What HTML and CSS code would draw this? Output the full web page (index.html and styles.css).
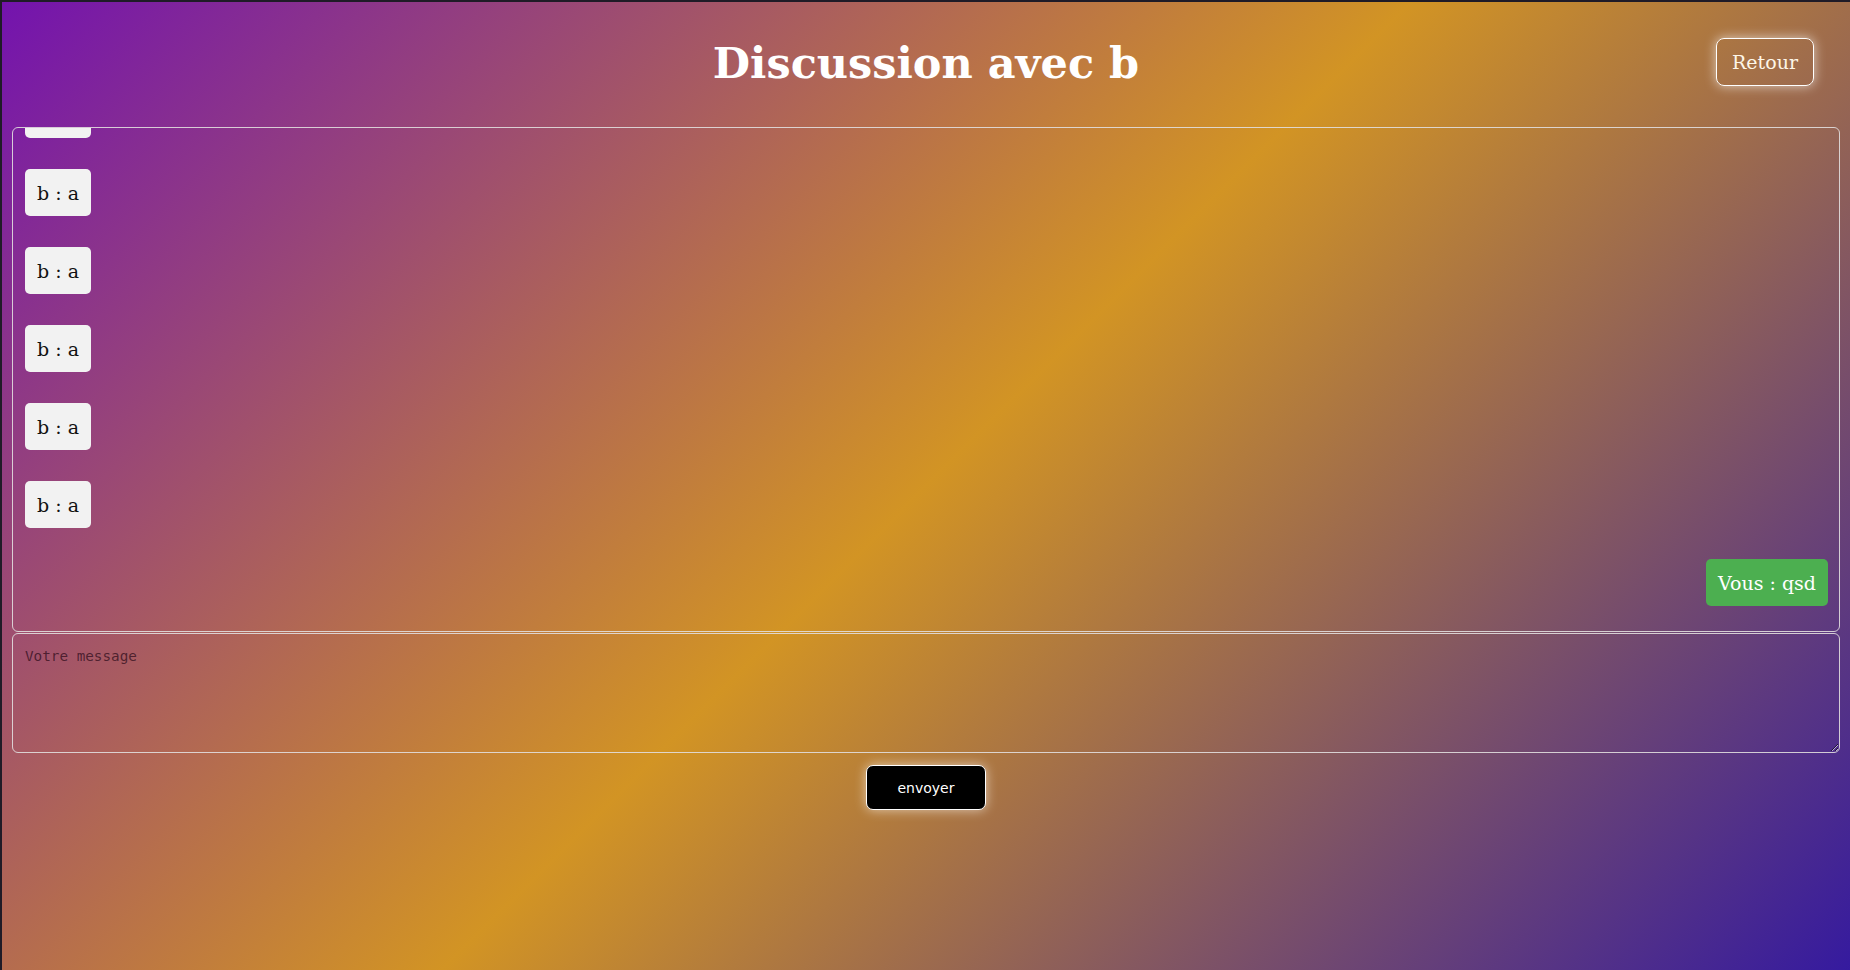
FILE: index.html
```html
<!DOCTYPE html>
<html lang="fr">
<head>
<meta charset="utf-8">
<title>Discussion avec b</title>
<link rel="stylesheet" href="styles.css">
</head>
<body>
<div class="page">
  <header class="header">
    <h1 class="title">Discussion avec b</h1>
    <a class="back" href="#">Retour</a>
  </header>
  <main class="chat">
    <div class="msg other">b : a</div>
    <div class="msg other">b : a</div>
    <div class="msg other">b : a</div>
    <div class="msg other">b : a</div>
    <div class="msg other">b : a</div>
    <div class="msg other">b : a</div>
    <div class="msg other">b : a</div>
    <div class="msg mine">Vous : qsd</div>
  </main>
  <textarea class="input" placeholder="Votre message"></textarea>
  <div class="actions">
    <button class="send" type="button">envoyer</button>
  </div>
</div>
</body>
</html>
```
FILE: styles.css
```css
html {
  margin: 0;
  height: 100%;
  background: #1f1b27;
}

body {
  margin: 2px 0 0 2px;
  min-height: calc(100vh - 2px);
  background: linear-gradient(135deg, #7313ae 0%, #d29424 50%, #351a9f 100%);
  font-family: "DejaVu Serif", serif;
}

.page {
  position: relative;
  padding: 0 10px 0 10px;
}

.header {
  padding: 36px 0 39px;
}

.title {
  margin: 0;
  text-align: center;
  font-family: "DejaVu Serif", serif;
  font-weight: bold;
  font-size: 43px;
  line-height: 50px;
  color: #ffffff;
}

.back {
  position: absolute;
  top: 36px;
  right: 36px;
  padding: 12px 15px;
  border: 1px solid #ffffff;
  border-radius: 8px;
  color: #fdf6e8;
  font-family: "DejaVu Serif", serif;
  font-size: 19px;
  text-decoration: none;
  box-shadow: 0 0 12px rgba(255, 255, 255, 0.65);
}

.chat {
  box-sizing: border-box;
  height: 505px;
  border: 1px solid rgba(225, 222, 222, 0.9);
  border-radius: 6px;
  overflow: hidden;
  display: flex;
  flex-direction: column;
  justify-content: flex-end;
  align-items: flex-start;
  gap: 31px;
  padding: 0 11px 25px 12px;
}

.msg {
  flex-shrink: 0;
  padding: 12.5px 12px;
  border-radius: 5px;
  font-family: "DejaVu Serif", serif;
  font-size: 19px;
  line-height: 22px;
}

.other {
  background: #f2f2f2;
  color: #111111;
}

.mine {
  align-self: flex-end;
  background: #4caf50;
  color: #ffffff;
}

.input {
  display: block;
  box-sizing: border-box;
  width: 100%;
  height: 120px;
  margin: 1px 0 0;
  padding: 14px 12px 12px;
  border: 1px solid rgba(225, 222, 222, 0.9);
  border-radius: 6px;
  background: transparent;
  font-family: "DejaVu Sans Mono", monospace;
  font-size: 14.3px;
  color: #222;
}

.input::placeholder {
  color: rgba(35, 5, 20, 0.68);
}

.actions {
  display: flex;
  justify-content: center;
  margin-top: 12px;
}

.send {
  box-sizing: border-box;
  width: 120px;
  height: 45px;
  background: #000000;
  color: #ffffff;
  border: 1px solid #ffffff;
  border-radius: 7px;
  font-family: "DejaVu Sans", sans-serif;
  font-size: 14px;
  box-shadow: 0 0 12px rgba(255, 255, 255, 0.6);
}
```
